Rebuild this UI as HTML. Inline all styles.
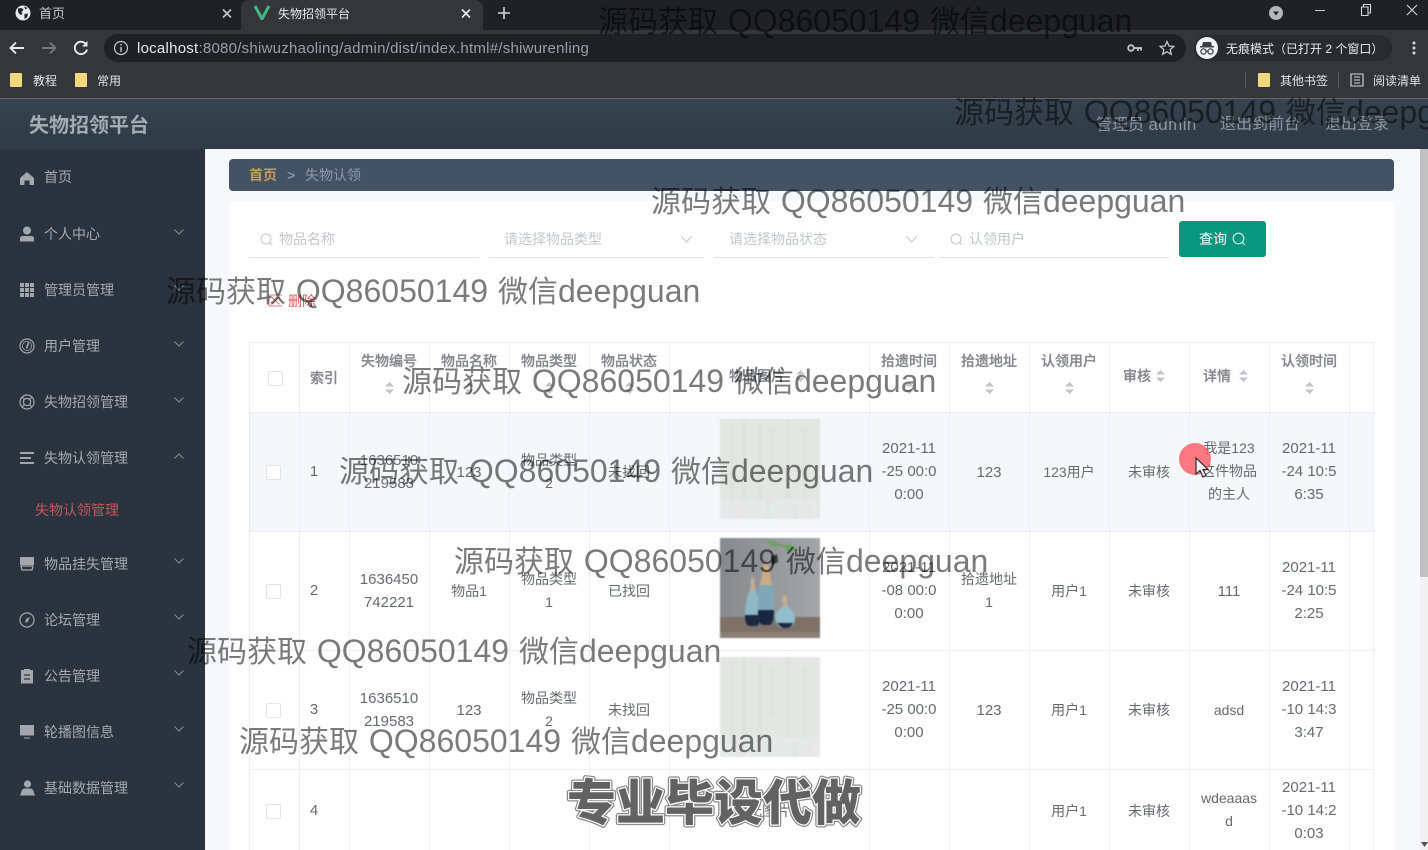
<!DOCTYPE html>
<html lang="zh-CN"><head><meta charset="utf-8"><title>失物招领平台</title>
<style>
html,body{margin:0;padding:0;width:1428px;height:850px;overflow:hidden;background:#f6f8fb}
body{position:relative;font-family:"Liberation Sans","Noto Sans CJK SC",sans-serif;font-size:14px;color:#606266}
div,svg,span.a{position:absolute}
.t{white-space:nowrap;line-height:20px}
.c{display:flex;align-items:center;justify-content:center;text-align:center;line-height:23px;color:#666a70;font-size:14px;box-sizing:border-box}
.s{padding-top:2px}
.n{font-size:15px}
.h{text-align:center;line-height:20px;color:#85888e;font-size:14px;font-weight:500;white-space:nowrap;-webkit-text-stroke:.25px #85888e}
.m{color:#a6abb1;font-size:14px;left:44px;white-space:nowrap;line-height:20px;margin-top:1px}
.wm{font-size:32px;line-height:40px;word-spacing:1px;color:rgba(0,0,0,.52);white-space:nowrap;z-index:20}
.wm span{font-size:30px}
.ph{color:#c3c6cc;white-space:nowrap;line-height:20px}
.ul{height:1px;background:#dfe1e5;top:257px}
.cb{width:13px;height:13px;border:1px solid #e2e4e9;background:#fff;border-radius:2px}
.v{width:1px;background:#ebeef5;top:342px;height:508px}
.r{height:1px;background:#ebeef5;left:249px;width:1125px}
.im{filter:blur(.7px)}
</style></head><body>

<!-- browser chrome -->
<div style="left:0;top:0;width:1428px;height:30px;background:#202124"></div>
<div style="left:241px;top:0;width:242px;height:30px;background:#35363a;border-radius:8px 8px 0 0"></div>
<div style="left:0;top:30px;width:1428px;height:68px;background:#35363a"></div>
<div style="left:0;top:98px;width:1428px;height:1px;background:#62676c"></div>

<svg style="left:15px;top:5px" width="16" height="16" viewBox="0 0 16 16"><circle cx="8" cy="8" r="7.5" fill="#e8eaed"/><path d="M3 3.5 L7 3 L8.5 5 L6.5 7 L7.5 9 L5.5 10 L3 7Z M9.5 9 L13 8.5 L12 12.5 L9.5 14Z M9 1.5 L12.5 3 L10.5 4.5Z" fill="#202124"/></svg>
<div class="t" style="left:39px;top:4px;color:#c4c7cb;font-size:13px">首页</div>
<svg style="left:222px;top:8px" width="10" height="11" viewBox="0 0 10 11"><path d="M1 1.5 L9 9.5 M9 1.5 L1 9.5" stroke="#c4c7cb" stroke-width="1.6"/></svg>
<svg style="left:254px;top:5px" width="16" height="15" viewBox="0 0 16 15"><path d="M1 1 L8 14 L15 1" fill="none" stroke="#41b883" stroke-width="3"/></svg>
<div class="t" style="left:278px;top:4px;color:#e8eaed;font-size:12px">失物招领平台</div>
<svg style="left:461px;top:8px" width="10" height="11" viewBox="0 0 10 11"><path d="M1 1.5 L9 9.5 M9 1.5 L1 9.5" stroke="#e8eaed" stroke-width="1.6"/></svg>
<svg style="left:497px;top:6px" width="14" height="14" viewBox="0 0 14 14"><path d="M7 1 V13 M1 7 H13" stroke="#d4d6d9" stroke-width="1.6"/></svg>

<svg style="left:1268px;top:5px" width="16" height="16" viewBox="0 0 16 16"><circle cx="8" cy="8" r="7" fill="#b4b6b9"/><path d="M5 6.5 H11 L8 10.5Z" fill="#202124"/></svg>
<svg style="left:1314px;top:4px" width="12" height="12"><path d="M1 6.5 H11" stroke="#c8cacd" stroke-width="1"/></svg>
<svg style="left:1360px;top:3px" width="12" height="14" viewBox="0 0 12 14"><path d="M1.5 4 H8 V12.5 H1.5Z M3.5 4 V1.5 H10.5 V10 H8" fill="none" stroke="#d4d6d9" stroke-width="1.1"/></svg>
<svg style="left:1405px;top:3px" width="14" height="14" viewBox="0 0 14 14"><path d="M2 2 L12 12 M12 2 L2 12" stroke="#d4d6d9" stroke-width="1.1"/></svg>

<svg style="left:8px;top:39px" width="18" height="18" viewBox="0 0 18 18"><path d="M16 9 H3 M8 3.5 L2.5 9 L8 14.5" fill="none" stroke="#e8eaed" stroke-width="1.9"/></svg>
<svg style="left:40px;top:39px" width="18" height="18" viewBox="0 0 18 18"><path d="M2 9 H15 M10 3.5 L15.5 9 L10 14.5" fill="none" stroke="#77797d" stroke-width="1.9"/></svg>
<svg style="left:72px;top:39px" width="18" height="18" viewBox="0 0 18 18"><path d="M14.5 6 A6.2 6.2 0 1 0 15 10.5" fill="none" stroke="#e8eaed" stroke-width="1.9"/><path d="M15.5 2 V7.5 H10Z" fill="#e8eaed"/></svg>
<div style="left:104px;top:34px;width:1082px;height:28px;border-radius:14px;background:#202124"></div>
<svg style="left:113px;top:40px" width="16" height="16" viewBox="0 0 16 16"><circle cx="8" cy="8" r="6.5" fill="none" stroke="#c4c7cb" stroke-width="1.2"/><path d="M8 7 V12 M8 4 V5.6" stroke="#c4c7cb" stroke-width="1.4"/></svg>
<div class="t" style="left:137px;top:38px;font-size:15px;color:#9aa0a6;letter-spacing:.25px;line-height:21px"><span style="color:#e8eaed">localhost</span>:8080/shiwuzhaoling/admin/dist/index.html#/shiwurenling</div>
<svg style="left:1127px;top:43px" width="16" height="10" viewBox="0 0 16 10"><circle cx="4" cy="5" r="2.8" fill="none" stroke="#c4c7cb" stroke-width="1.8"/><path d="M7 5 H15 M11 5 V8 M14 5 V7.5" stroke="#c4c7cb" stroke-width="1.8"/></svg>
<svg style="left:1159px;top:40px" width="16" height="16" viewBox="0 0 16 16"><path d="M8 1.5 L10 6 L14.8 6.4 L11.2 9.6 L12.3 14.3 L8 11.8 L3.7 14.3 L4.8 9.6 L1.2 6.4 L6 6Z" fill="none" stroke="#c4c7cb" stroke-width="1.3"/></svg>
<div style="left:1194px;top:35px;width:198px;height:26px;border-radius:13px;background:#2a2b2e"></div>
<svg style="left:1196px;top:37px" width="22" height="22" viewBox="0 0 22 22"><circle cx="11" cy="11" r="11" fill="#f1f3f4"/><path d="M7 5 H15 L16 9 H18 V10.5 H4 V9 H6Z" fill="#3c4043"/><circle cx="7.5" cy="14.5" r="2.6" fill="none" stroke="#3c4043" stroke-width="1.3"/><circle cx="14.5" cy="14.5" r="2.6" fill="none" stroke="#3c4043" stroke-width="1.3"/><path d="M10 14 H12" stroke="#3c4043"/></svg>
<div class="t" style="left:1226px;top:39px;font-size:12px;color:#e8eaed">无痕模式（已打开 2 个窗口）</div>
<svg style="left:1411px;top:40px" width="6" height="16"><circle cx="3" cy="3" r="1.5" fill="#d4d6d9"/><circle cx="3" cy="8" r="1.5" fill="#d4d6d9"/><circle cx="3" cy="13" r="1.5" fill="#d4d6d9"/></svg>

<div style="left:10px;top:73px;width:12px;height:14px;background:#f6d77c;border-radius:1px"></div>
<div class="t" style="left:33px;top:71px;font-size:12px;color:#e2e4e7">教程</div>
<div style="left:75px;top:73px;width:12px;height:14px;background:#f6d77c;border-radius:1px"></div>
<div class="t" style="left:97px;top:71px;font-size:12px;color:#e2e4e7">常用</div>
<div style="left:1245px;top:72px;width:1px;height:16px;background:#55575b"></div>
<div style="left:1258px;top:73px;width:12px;height:14px;background:#f6d77c;border-radius:1px"></div>
<div class="t" style="left:1280px;top:71px;font-size:12px;color:#e2e4e7">其他书签</div>
<div style="left:1338px;top:72px;width:1px;height:16px;background:#55575b"></div>
<svg style="left:1350px;top:73px" width="14" height="14" viewBox="0 0 14 14"><path d="M1 1 H13 V13 H1Z M4 4 H10 M4 7 H10 M4 10 H10" fill="none" stroke="#d4d6d9" stroke-width="1.1"/></svg>
<div class="t" style="left:1373px;top:71px;font-size:12px;color:#e2e4e7">阅读清单</div>

<!-- app header -->
<div style="left:0;top:99px;width:1428px;height:50px;background:linear-gradient(180deg,#37434f,#2f3a47)"></div>
<div class="t" style="left:29px;top:115px;font-size:20px;line-height:22px;font-weight:700;color:#a4abb2">失物招领平台</div>
<div class="t" style="left:1096px;top:115px;font-size:16px;color:#8f98a1">管理员 <span style="font-size:17px;letter-spacing:.4px">admin</span></div>
<div class="t" style="left:1220px;top:115px;font-size:16px;color:#8f98a1">退出到前台</div>
<div class="t" style="left:1325px;top:115px;font-size:16px;color:#8f98a1">退出登录</div>

<!-- sidebar -->
<div style="left:0;top:149px;width:205px;height:701px;background:#2b333e"></div>
<svg style="left:20px;top:171px" width="14" height="14" viewBox="0 0 14 14"><path d="M7 1 L14 7 V14 H9.5 V9.5 H4.5 V14 H0 V7Z" fill="#a3a7ac"/></svg>
<div class="m" style="top:166px">首页</div>
<svg style="left:20px;top:226px" width="14" height="16" viewBox="0 0 14 16"><circle cx="7" cy="4.5" r="4" fill="#a3a7ac"/><path d="M0 15.5 V12.5 Q0 10 3 10 H11 Q14 10 14 12.5 V15.5Z" fill="#a3a7ac"/></svg>
<div class="m" style="top:223px">个人中心</div>
<svg style="left:20px;top:283px" width="14" height="14" viewBox="0 0 14 14"><path d="M0 0H4V4H0Z M5 0H9V4H5Z M10 0H14V4H10Z M0 5H4V9H0Z M5 5H9V9H5Z M10 5H14V9H10Z M0 10H4V14H0Z M5 10H9V14H5Z M10 10H14V14H10Z" fill="#a3a7ac"/></svg>
<div class="m" style="top:279px">管理员管理</div>
<svg style="left:19px;top:338px" width="16" height="16" viewBox="0 0 16 16"><circle cx="8" cy="8" r="7" fill="none" stroke="#a3a7ac" stroke-width="1.2"/><circle cx="8" cy="8" r="4.6" fill="none" stroke="#a3a7ac" stroke-width=".8"/><path d="M9.5 4.5 L7.5 10.5" stroke="#a3a7ac" stroke-width="1.6"/></svg>
<div class="m" style="top:335px">用户管理</div>
<svg style="left:19px;top:394px" width="16" height="16" viewBox="0 0 16 16"><circle cx="8" cy="8" r="7" fill="none" stroke="#a3a7ac" stroke-width="1.2"/><circle cx="8" cy="8" r="3.6" fill="none" stroke="#a3a7ac" stroke-width="1.2"/><path d="M3 3 L5.5 5.5 M13 3 L10.5 5.5 M3 13 L5.5 10.5 M13 13 L10.5 10.5" stroke="#a3a7ac" stroke-width="1.2"/></svg>
<div class="m" style="top:391px">失物招领管理</div>
<svg style="left:20px;top:452px" width="14" height="12" viewBox="0 0 14 12"><path d="M0 0H14V2H0Z M0 5H11V7H0Z M0 10H14V12H0Z" fill="#a3a7ac"/></svg>
<div class="m" style="top:447px">失物认领管理</div>
<div class="t" style="left:35px;top:500px;color:#c9555c">失物认领管理</div>
<svg style="left:20px;top:557px" width="14" height="14" viewBox="0 0 14 14"><path d="M1 0 H13 Q14 0 14 1 V8 H0 V1 Q0 0 1 0Z" fill="#a3a7ac"/><path d="M1 9 H13 L12 13 H2Z" fill="none" stroke="#a3a7ac" stroke-width="1.3"/></svg>
<div class="m" style="top:553px">物品挂失管理</div>
<svg style="left:19px;top:612px" width="16" height="16" viewBox="0 0 16 16"><circle cx="8" cy="8" r="7" fill="none" stroke="#a3a7ac" stroke-width="1.2"/><path d="M11 5 L9 9.5 L6 11 L7 7Z" fill="#a3a7ac"/></svg>
<div class="m" style="top:609px">论坛管理</div>
<svg style="left:21px;top:668px" width="12" height="16" viewBox="0 0 12 16"><path d="M0 2 H3 V1 H9 V2 H12 V15.5 H0Z" fill="#a3a7ac"/><path d="M3 7 H9 M3 11 H9" stroke="#2b333e" stroke-width="1.2"/></svg>
<div class="m" style="top:665px">公告管理</div>
<svg style="left:20px;top:725px" width="14" height="14" viewBox="0 0 14 14"><path d="M0 0H14V10.5H0Z M4 12.5H10V13.5H4Z" fill="#a3a7ac"/></svg>
<div class="m" style="top:721px">轮播图信息</div>
<svg style="left:20px;top:780px" width="15" height="16" viewBox="0 0 15 16"><circle cx="7.5" cy="4" r="3.6" fill="#a3a7ac"/><path d="M0 15.5 L2 10 Q3 8.5 5 8.5 H10 Q12 8.5 13 10 L15 15.5Z" fill="#a3a7ac"/></svg>
<div class="m" style="top:777px">基础数据管理</div>
<svg style="left:174px;top:229px;display:block" width="10" height="6"><path d="M.5 .5 L5 5 L9.5 .5" fill="none" stroke="#8a8f95"/></svg>
<svg style="left:174px;top:285px" width="10" height="6"><path d="M.5 .5 L5 5 L9.5 .5" fill="none" stroke="#8a8f95"/></svg>
<svg style="left:174px;top:341px" width="10" height="6"><path d="M.5 .5 L5 5 L9.5 .5" fill="none" stroke="#8a8f95"/></svg>
<svg style="left:174px;top:397px" width="10" height="6"><path d="M.5 .5 L5 5 L9.5 .5" fill="none" stroke="#8a8f95"/></svg>
<svg style="left:174px;top:453px" width="10" height="6"><path d="M.5 5.5 L5 1 L9.5 5.5" fill="none" stroke="#8a8f95"/></svg>
<svg style="left:174px;top:558px" width="10" height="6"><path d="M.5 .5 L5 5 L9.5 .5" fill="none" stroke="#8a8f95"/></svg>
<svg style="left:174px;top:614px" width="10" height="6"><path d="M.5 .5 L5 5 L9.5 .5" fill="none" stroke="#8a8f95"/></svg>
<svg style="left:174px;top:670px" width="10" height="6"><path d="M.5 .5 L5 5 L9.5 .5" fill="none" stroke="#8a8f95"/></svg>
<svg style="left:174px;top:726px" width="10" height="6"><path d="M.5 .5 L5 5 L9.5 .5" fill="none" stroke="#8a8f95"/></svg>
<svg style="left:174px;top:782px" width="10" height="6"><path d="M.5 .5 L5 5 L9.5 .5" fill="none" stroke="#8a8f95"/></svg>

<!-- scrollbar -->
<div style="left:1420px;top:149px;width:8px;height:701px;background:#f1f1f1"></div>
<div style="left:1420px;top:149px;width:8px;height:428px;background:#c1c1c1"></div>
<svg style="left:1421px;top:842px" width="7" height="5"><path d="M0 0H7L3.5 5Z" fill="#505050"/></svg>

<!-- content -->
<div style="left:229px;top:159px;width:1165px;height:32px;border-radius:4px;background:#435265"></div>
<div class="t" style="left:249px;top:165px;color:#c39c5f;font-weight:700">首页</div>
<div class="t" style="left:287px;top:165px;color:#a5adb8">&gt;</div>
<div class="t" style="left:305px;top:165px;color:#8e99a6">失物认领</div>
<div style="left:229px;top:201px;width:1165px;height:649px;background:#fff;border-radius:4px 4px 0 0"></div>

<!-- search -->
<svg style="left:260px;top:233px" width="13" height="13" viewBox="0 0 13 13"><circle cx="6" cy="6" r="5" fill="none" stroke="#c3c6cc" stroke-width="1"/><path d="M9.5 9.5 L12 12" stroke="#c3c6cc"/></svg>
<div class="ph" style="left:279px;top:229px">物品名称</div>
<div class="ul" style="left:249px;width:230px"></div>
<div class="ph" style="left:504px;top:229px">请选择物品类型</div>
<svg style="left:681px;top:236px" width="11" height="7"><path d="M.5 .5 L5.5 6 L10.5 .5" fill="none" stroke="#c3c6cc"/></svg>
<div class="ul" style="left:489px;width:215px"></div>
<div class="ph" style="left:729px;top:229px">请选择物品状态</div>
<svg style="left:906px;top:236px" width="11" height="7"><path d="M.5 .5 L5.5 6 L10.5 .5" fill="none" stroke="#c3c6cc"/></svg>
<div class="ul" style="left:714px;width:220px"></div>
<svg style="left:950px;top:233px" width="13" height="13" viewBox="0 0 13 13"><circle cx="6" cy="6" r="5" fill="none" stroke="#c3c6cc" stroke-width="1"/><path d="M9.5 9.5 L12 12" stroke="#c3c6cc"/></svg>
<div class="ph" style="left:969px;top:229px">认领用户</div>
<div class="ul" style="left:939px;width:230px"></div>
<div style="left:1179px;top:221px;width:87px;height:36px;background:#07977f;border-radius:3px"></div>
<div class="t" style="left:1199px;top:229px;color:#fff">查询</div>
<svg style="left:1232px;top:232px" width="14" height="14" viewBox="0 0 14 14"><circle cx="6.5" cy="6.5" r="5.3" fill="none" stroke="#d8f0ec" stroke-width="1.1"/><path d="M10.3 10.3 L13 13" stroke="#d8f0ec" stroke-width="1.1"/></svg>

<svg style="left:268px;top:294px" width="15" height="13" viewBox="0 0 15 13"><path d="M14 1 H1 V12 H14 M3.5 3 L11.5 10.5 M11.5 3 L3.5 10.5" fill="none" stroke="#d98080" stroke-width="1"/></svg>
<div class="t" style="left:288px;top:291px;color:#d9575a">删除</div>

<!-- table -->
<div style="left:250px;top:413px;width:1123px;height:118px;background:#f5f7fa"></div>
<div class="r" style="top:342px"></div><div class="r" style="top:412px"></div><div class="r" style="top:531px"></div><div class="r" style="top:650px"></div><div class="r" style="top:769px"></div>
<div class="v" style="left:249px"></div><div class="v" style="left:299px"></div><div class="v" style="left:349px"></div><div class="v" style="left:429px"></div><div class="v" style="left:509px"></div><div class="v" style="left:589px"></div><div class="v" style="left:669px"></div><div class="v" style="left:869px"></div><div class="v" style="left:949px"></div><div class="v" style="left:1029px"></div><div class="v" style="left:1109px"></div><div class="v" style="left:1189px"></div><div class="v" style="left:1269px"></div><div class="v" style="left:1349px"></div><div class="v" style="left:1373px"></div>

<div class="cb" style="left:268px;top:371px"></div>
<div class="h" style="left:310px;top:368px">索引</div>
<div class="h" style="left:349px;width:80px;top:351px">失物编号</div>
<div class="h" style="left:429px;width:80px;top:351px">物品名称</div>
<div class="h" style="left:509px;width:80px;top:351px">物品类型</div>
<div class="h" style="left:589px;width:80px;top:351px">物品状态</div>
<div class="h" style="left:729px;top:366px">物品图片</div>
<div class="h" style="left:869px;width:80px;top:351px">拾遗时间</div>
<div class="h" style="left:949px;width:80px;top:351px">拾遗地址</div>
<div class="h" style="left:1029px;width:80px;top:351px">认领用户</div>
<div class="h" style="left:1123px;top:366px">审核</div>
<div class="h" style="left:1203px;top:366px">详情</div>
<div class="h" style="left:1269px;width:80px;top:351px">认领时间</div>
<svg style="left:385px;top:382px" width="9" height="12"><path d="M4.5 0 L9 4.5 H0Z M0 7.5 H9 L4.5 12Z" fill="#c0c4cc"/></svg>
<svg style="left:465px;top:382px" width="9" height="12"><path d="M4.5 0 L9 4.5 H0Z M0 7.5 H9 L4.5 12Z" fill="#c0c4cc"/></svg>
<svg style="left:545px;top:382px" width="9" height="12"><path d="M4.5 0 L9 4.5 H0Z M0 7.5 H9 L4.5 12Z" fill="#c0c4cc"/></svg>
<svg style="left:625px;top:382px" width="9" height="12"><path d="M4.5 0 L9 4.5 H0Z M0 7.5 H9 L4.5 12Z" fill="#c0c4cc"/></svg>
<svg style="left:796px;top:370px" width="9" height="12"><path d="M4.5 0 L9 4.5 H0Z M0 7.5 H9 L4.5 12Z" fill="#c0c4cc"/></svg>
<svg style="left:905px;top:382px" width="9" height="12"><path d="M4.5 0 L9 4.5 H0Z M0 7.5 H9 L4.5 12Z" fill="#c0c4cc"/></svg>
<svg style="left:985px;top:382px" width="9" height="12"><path d="M4.5 0 L9 4.5 H0Z M0 7.5 H9 L4.5 12Z" fill="#c0c4cc"/></svg>
<svg style="left:1065px;top:382px" width="9" height="12"><path d="M4.5 0 L9 4.5 H0Z M0 7.5 H9 L4.5 12Z" fill="#c0c4cc"/></svg>
<svg style="left:1156px;top:370px" width="9" height="12"><path d="M4.5 0 L9 4.5 H0Z M0 7.5 H9 L4.5 12Z" fill="#c0c4cc"/></svg>
<svg style="left:1239px;top:370px" width="9" height="12"><path d="M4.5 0 L9 4.5 H0Z M0 7.5 H9 L4.5 12Z" fill="#c0c4cc"/></svg>
<svg style="left:1305px;top:382px" width="9" height="12"><path d="M4.5 0 L9 4.5 H0Z M0 7.5 H9 L4.5 12Z" fill="#c0c4cc"/></svg>

<!-- row 1 -->
<div class="cb" style="left:266px;top:465px"></div>
<div class="c n" style="left:299px;width:30px;top:412px;height:119px">1</div>
<div class="c n" style="left:349px;width:80px;top:412px;height:119px">1636510<br>219583</div>
<div class="c n s" style="left:429px;width:80px;top:412px;height:119px">123</div>
<div class="c" style="left:509px;width:80px;top:412px;height:119px">物品类型<br>2</div>
<div class="c s" style="left:589px;width:80px;top:412px;height:119px">未找回</div>
<svg class="im" style="left:720px;top:419px" width="100" height="100" viewBox="0 0 100 100"><rect width="100" height="100" fill="#e4e6e4"/><path d="M12 5V95M24 0V100M40 5V85M52 10V60M68 0V80M85 10V95" stroke="#dee0de" stroke-width="5" opacity=".6"/><path d="M0 80H100V100H0Z" fill="#e4e9e8" opacity=".9"/><path d="M48 82V100M75 84V100" stroke="#dbe8e6" stroke-width="5"/><path d="M20 84V100M90 86V100" stroke="#ebe4e6" stroke-width="5"/></svg>
<div class="c n" style="left:869px;width:80px;top:412px;height:119px">2021-11<br>-25 00:0<br>0:00</div>
<div class="c n s" style="left:949px;width:80px;top:412px;height:119px">123</div>
<div class="c s" style="left:1029px;width:80px;top:412px;height:119px">123用户</div>
<div class="c s" style="left:1109px;width:80px;top:412px;height:119px">未审核</div>
<div class="c" style="left:1189px;width:80px;top:412px;height:119px">我是123<br>这件物品<br>的主人</div>
<div class="c n" style="left:1269px;width:80px;top:412px;height:119px">2021-11<br>-24 10:5<br>6:35</div>

<!-- row 2 -->
<div class="cb" style="left:266px;top:584px"></div>
<div class="c n" style="left:299px;width:30px;top:531px;height:119px">2</div>
<div class="c n" style="left:349px;width:80px;top:531px;height:119px">1636450<br>742221</div>
<div class="c s" style="left:429px;width:80px;top:531px;height:119px">物品1</div>
<div class="c" style="left:509px;width:80px;top:531px;height:119px">物品类型<br>1</div>
<div class="c s" style="left:589px;width:80px;top:531px;height:119px">已找回</div>
<svg class="im" style="left:720px;top:538px" width="100" height="100" viewBox="0 0 100 100"><defs><linearGradient id="w" x1="0" x2="1"><stop offset="0" stop-color="#87898c"/><stop offset="1" stop-color="#a3a5a8"/></linearGradient></defs><rect width="100" height="100" fill="url(#w)"/><rect y="79" width="100" height="21" fill="#7d7168"/><rect y="94" width="100" height="6" fill="#8a7e75"/><path d="M48 3 Q62 8 78 12" fill="none" stroke="#5f8a52" stroke-width="1.2"/><path d="M48 2 L56 3 L58 10 L50 8Z M62 7 L70 6 L78 12 L68 14Z" fill="#6fa267"/><path d="M51 19 L57 16 L58 24 L52 27Z" fill="#2e3a2e"/><path d="M32 39 Q30 39 31 50 Q26 60 25 72 Q25 88 30 88 H36 Q40 88 40 72 Q39 60 35 50 Q35 39 33 39Z" fill="#8fb8c6"/><path d="M32 39 H33.500 L35 52 H30Z" fill="#c7ab88"/><path d="M25 77 H40 Q40 88 36 88 H30 Q25 88 25 77Z" fill="#1c2742"/><path d="M44 25 Q43 38 40 47 Q37 56 38 72 Q38 87 43 87 H49 Q54 87 54 72 Q55 56 52 47 Q48 38 48 25Z" fill="#7ea8b8"/><path d="M44 25 H48 L52 47 H40Z" fill="#c9ab85"/><path d="M38 72 H54 Q54 87 49 87 H43 Q38 87 38 72Z" fill="#1a2540"/><path d="M63 57 Q61 60 63 68 Q55 74 55 80 Q56 90 65 90 H67 Q75 89 75 80 Q75 74 67 68 Q68 60 66 57Z" fill="#92bdcb"/><path d="M63 57 H66 L67 68 H62.500Z" fill="#c9ab85"/><path d="M57 85 Q62 91 66 90 Q71 90 73 85Z" fill="#1c2742"/></svg>
<div class="c n" style="left:869px;width:80px;top:531px;height:119px">2021-11<br>-08 00:0<br>0:00</div>
<div class="c" style="left:949px;width:80px;top:531px;height:119px">拾遗地址<br>1</div>
<div class="c s" style="left:1029px;width:80px;top:531px;height:119px">用户1</div>
<div class="c s" style="left:1109px;width:80px;top:531px;height:119px">未审核</div>
<div class="c n s" style="left:1189px;width:80px;top:531px;height:119px">111</div>
<div class="c n" style="left:1269px;width:80px;top:531px;height:119px">2021-11<br>-24 10:5<br>2:25</div>

<!-- row 3 -->
<div class="cb" style="left:266px;top:703px"></div>
<div class="c n" style="left:299px;width:30px;top:650px;height:119px">3</div>
<div class="c n" style="left:349px;width:80px;top:650px;height:119px">1636510<br>219583</div>
<div class="c n s" style="left:429px;width:80px;top:650px;height:119px">123</div>
<div class="c" style="left:509px;width:80px;top:650px;height:119px">物品类型<br>2</div>
<div class="c s" style="left:589px;width:80px;top:650px;height:119px">未找回</div>
<svg class="im" style="left:720px;top:657px" width="100" height="100" viewBox="0 0 100 100"><rect width="100" height="100" fill="#e4e6e4"/><path d="M12 5V95M24 0V100M40 5V85M52 10V60M68 0V80M85 10V95" stroke="#dee0de" stroke-width="5" opacity=".6"/><path d="M0 80H100V100H0Z" fill="#e4e9e8" opacity=".9"/><path d="M48 82V100M75 84V100" stroke="#dbe8e6" stroke-width="5"/><path d="M20 84V100M90 86V100" stroke="#ebe4e6" stroke-width="5"/></svg>
<div class="c n" style="left:869px;width:80px;top:650px;height:119px">2021-11<br>-25 00:0<br>0:00</div>
<div class="c n s" style="left:949px;width:80px;top:650px;height:119px">123</div>
<div class="c s" style="left:1029px;width:80px;top:650px;height:119px">用户1</div>
<div class="c s" style="left:1109px;width:80px;top:650px;height:119px">未审核</div>
<div class="c s" style="left:1189px;width:80px;top:650px;height:119px">adsd</div>
<div class="c n" style="left:1269px;width:80px;top:650px;height:119px">2021-11<br>-10 14:3<br>3:47</div>

<!-- row 4 -->
<div class="cb" style="left:266px;top:804px"></div>
<div class="c n" style="left:299px;width:30px;top:769px;height:82px">4</div>
<div class="c" style="left:669px;width:200px;top:770px;height:82px">无图片</div>
<div class="c s" style="left:1029px;width:80px;top:769px;height:82px">用户1</div>
<div class="c s" style="left:1109px;width:80px;top:769px;height:82px">未审核</div>
<div class="c" style="left:1189px;width:80px;top:769px;height:82px">wdeaaas<br>d</div>
<div class="c n" style="left:1269px;width:80px;top:769px;height:82px">2021-11<br>-10 14:2<br>0:03</div>

<!-- cursor highlight -->
<div style="left:1179px;top:443px;width:32px;height:32px;border-radius:50%;background:rgba(255,85,95,.78);z-index:25"></div>
<svg style="left:1195px;top:457px;z-index:26" width="16" height="22" viewBox="0 0 16 22"><path d="M1 1 V17 L5 13.5 L8 20 L11 18.5 L8 12.5 H13Z" fill="#f2f2f2" stroke="#222" stroke-width="1.1"/></svg>

<!-- watermarks -->
<div class="wm" style="left:598px;top:1px"><span>源码获取</span> QQ86050149 <span>微信</span>deepguan</div>
<div class="wm" style="left:954px;top:92px"><span>源码获取</span> QQ86050149 <span>微信</span>deepguan</div>
<div class="wm" style="left:651px;top:181px"><span>源码获取</span> QQ86050149 <span>微信</span>deepguan</div>
<div class="wm" style="left:166px;top:271px"><span>源码获取</span> QQ86050149 <span>微信</span>deepguan</div>
<div class="wm" style="left:402px;top:361px"><span>源码获取</span> QQ86050149 <span>微信</span>deepguan</div>
<div class="wm" style="left:339px;top:451px"><span>源码获取</span> QQ86050149 <span>微信</span>deepguan</div>
<div class="wm" style="left:454px;top:541px"><span>源码获取</span> QQ86050149 <span>微信</span>deepguan</div>
<div class="wm" style="left:187px;top:631px"><span>源码获取</span> QQ86050149 <span>微信</span>deepguan</div>
<div class="wm" style="left:239px;top:721px"><span>源码获取</span> QQ86050149 <span>微信</span>deepguan</div>
<svg style="left:560px;top:770px;z-index:30" width="310" height="64"><text x="7" y="50" font-size="49" font-weight="900" font-family="'Noto Sans CJK SC',sans-serif" fill="#626262" stroke="#8a8a8a" stroke-width="5" stroke-linejoin="round">专业毕设代做</text><text x="7" y="50" font-size="49" font-weight="900" font-family="'Noto Sans CJK SC',sans-serif" fill="#626262" stroke="#fff" stroke-width="2.5" stroke-linejoin="round">专业毕设代做</text><text x="7" y="50" font-size="49" font-weight="900" font-family="'Noto Sans CJK SC',sans-serif" fill="#626262">专业毕设代做</text></svg>
</body></html>
